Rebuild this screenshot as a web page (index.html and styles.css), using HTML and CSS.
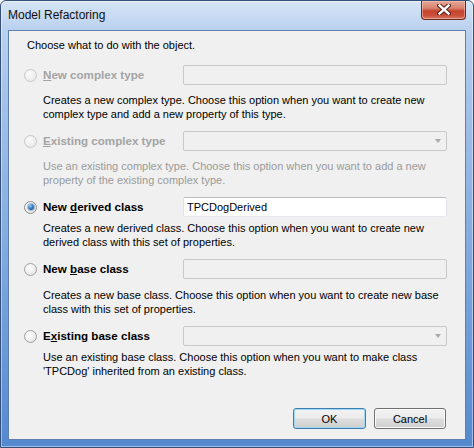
FILE: index.html
```html
<!DOCTYPE html>
<html>
<head>
<meta charset="utf-8">
<title>Model Refactoring</title>
<link rel="stylesheet" href="styles.css">
</head>
<body>
<div class="window">
  <div class="titlebar">
    <span class="title">Model Refactoring</span>
    <div class="close" aria-label="Close">
      <svg width="14" height="11" viewBox="0 0 14 11">
        <path d="M2.5 1.5 L11.5 9.5 M11.5 1.5 L2.5 9.5" stroke="#5a1c14" stroke-width="4.4" stroke-linecap="square" fill="none"/>
        <path d="M2.5 1.5 L11.5 9.5 M11.5 1.5 L2.5 9.5" stroke="#ffffff" stroke-width="2.4" stroke-linecap="square" fill="none"/>
      </svg>
    </div>
  </div>
  <div class="client">
    <p class="intro">Choose what to do with the object.</p>

    <div class="option">
      <div class="opt-row">
        <span class="radio is-disabled"></span>
        <span class="opt-label is-disabled"><u>N</u>ew complex type</span>
        <div class="field is-disabled"></div>
      </div>
      <p class="desc">Creates a new complex type. Choose this option when you want to create new<br>complex type and add a new property of this type.</p>
    </div>

    <div class="option">
      <div class="opt-row">
        <span class="radio is-disabled"></span>
        <span class="opt-label is-disabled"><u>E</u>xisting complex type</span>
        <div class="field combo is-disabled"><span class="arrow"></span></div>
      </div>
      <p class="desc is-disabled">Use an existing complex type. Choose this option when you want to add a new<br>property of the existing complex type.</p>
    </div>

    <div class="option">
      <div class="opt-row">
        <span class="radio is-checked"></span>
        <span class="opt-label">New <u>d</u>erived class</span>
        <div class="field is-enabled">TPCDogDerived</div>
      </div>
      <p class="desc near">Creates a new derived class. Choose this option when you want to create new<br>derived class with this set of properties.</p>
    </div>

    <div class="option">
      <div class="opt-row">
        <span class="radio"></span>
        <span class="opt-label">New <u>b</u>ase class</span>
        <div class="field is-disabled"></div>
      </div>
      <p class="desc far">Creates a new base class. Choose this option when you want to create new base<br>class with this set of properties.</p>
    </div>

    <div class="option last">
      <div class="opt-row">
        <span class="radio"></span>
        <span class="opt-label">E<u>x</u>isting base class</span>
        <div class="field combo is-disabled"><span class="arrow"></span></div>
      </div>
      <p class="desc near">Use an existing base class. Choose this option when you want to make class<br>'TPCDog' inherited from an existing class.</p>
    </div>

    <div class="buttons">
      <button class="btn is-default">OK</button>
      <button class="btn">Cancel</button>
    </div>
  </div>
</div>
</body>
</html>
```
FILE: styles.css
```css
html, body {
  margin: 0;
  padding: 0;
  background: #ffffff;
}

body {
  font-family: "Liberation Sans", Arial, sans-serif;
  font-size: 11px;
  color: #000;
}

.window {
  width: 474px;
  height: 448px;
  box-sizing: border-box;
  border: 1px solid #34507a;
  border-radius: 6px 6px 0 0;
  background: linear-gradient(180deg, #d6e5f6 0px, #bad2ef 28px, #a6c3ea 90px, #7ea8de 260px, #5489cf 446px);
  box-shadow: inset 0 0 0 1px rgba(255, 255, 255, 0.45);
  padding: 0 7px 7px 7px;
  display: flex;
  flex-direction: column;
}

.titlebar {
  height: 29px;
  display: flex;
  align-items: flex-start;
  flex: none;
}

.title {
  font-size: 12px;
  line-height: 16px;
  margin-top: 6px;
  color: #101010;
}

.close {
  margin-left: auto;
  width: 45px;
  height: 19px;
  box-sizing: border-box;
  border: 1px solid #6b2a22;
  border-top: none;
  border-radius: 0 0 4px 4px;
  background: linear-gradient(180deg, #e7a697 0%, #d8826f 40%, #c4442e 55%, #c9503a 80%, #d77a62 100%);
  box-shadow: inset 0 0 0 1px rgba(255, 210, 200, 0.45);
  display: flex;
  align-items: center;
  justify-content: center;
}

.close svg {
  display: block;
  margin-top: -1px;
}

.client {
  flex: 1;
  box-sizing: border-box;
  border: 1px solid #5f7faf;
  background: #f0f0f0;
  padding: 7px 18px 10px 15px;
  display: flex;
  flex-direction: column;
}

.intro {
  margin: 0 0 0 3px;
  line-height: 14px;
}

.option {
  margin-top: 10px;
}

.option:first-of-type {
  margin-top: 13px;
}

.opt-row {
  display: flex;
  align-items: center;
  height: 20px;
}

.radio {
  flex: none;
  width: 13px;
  height: 13px;
  box-sizing: border-box;
  border-radius: 50%;
  border: 1px solid #a2a2a2;
  background: radial-gradient(circle at 40% 35%, #ffffff 0%, #f3f3f3 40%, #d9d9d9 100%);
  display: flex;
  align-items: center;
  justify-content: center;
}

.radio.is-disabled {
  border-color: #c8c8c8;
  background: radial-gradient(circle at 40% 35%, #fbfbfb 0%, #eeeeee 60%, #e4e4e4 100%);
}

.radio.is-checked {
  border-color: #8e8f8f;
}

.radio.is-checked::after {
  content: "";
  width: 6px;
  height: 6px;
  border-radius: 50%;
  background: radial-gradient(circle at 35% 30%, #9fd0f6 0%, #3b80c8 45%, #0d3f7e 100%);
  box-shadow: 0 0 0 1px rgba(30, 80, 140, 0.35);
}

.opt-label {
  flex: none;
  width: 140px;
  margin-left: 6px;
  font-weight: bold;
  font-size: 11.6px;
  line-height: 14px;
  white-space: nowrap;
}

.opt-label.is-disabled {
  color: #a3a3a3;
}

.field {
  flex: 1;
  height: 20px;
  box-sizing: border-box;
  border: 1px solid #c8c8c8;
  border-radius: 2px;
  background: #f0f0f0;
  display: flex;
  align-items: center;
  padding: 0 3px;
  line-height: 14px;
}

.field.is-enabled {
  background: #ffffff;
  border-color: #b9bcc2 #e0e3e8 #e6e9ee #dfe2e7;
}

.field.combo {
  justify-content: flex-end;
}

.arrow {
  width: 0;
  height: 0;
  border-left: 3.5px solid transparent;
  border-right: 3.5px solid transparent;
  border-top: 4px solid #a8a8a8;
  margin-right: 2px;
}

.desc {
  margin: 8px 0 0 0;
  padding-left: 19px;
  line-height: 14px;
  white-space: nowrap;
}

.desc.near {
  margin-top: 4px;
}

.desc.far {
  margin-top: 9px;
}

.desc.is-disabled {
  color: #9a9a9a;
}

.buttons {
  margin-top: auto;
  margin-right: 1px;
  display: flex;
  justify-content: flex-end;
  gap: 8px;
}

.btn {
  width: 73px;
  height: 21px;
  box-sizing: border-box;
  margin: 0;
  padding: 0;
  font-family: "Liberation Sans", Arial, sans-serif;
  font-size: 11px;
  color: #000;
  border: 1px solid #707070;
  border-radius: 3px;
  background: linear-gradient(180deg, #f3f3f3 0%, #ebebeb 48%, #dddddd 52%, #cfcfcf 100%);
  box-shadow: inset 0 0 0 1px #fbfbfb;
}

.btn + .btn {
  width: 72px;
}

.btn.is-default {
  border-color: #3c7fb1;
  box-shadow: inset 0 0 0 1px #9ed8f5;
}
```
